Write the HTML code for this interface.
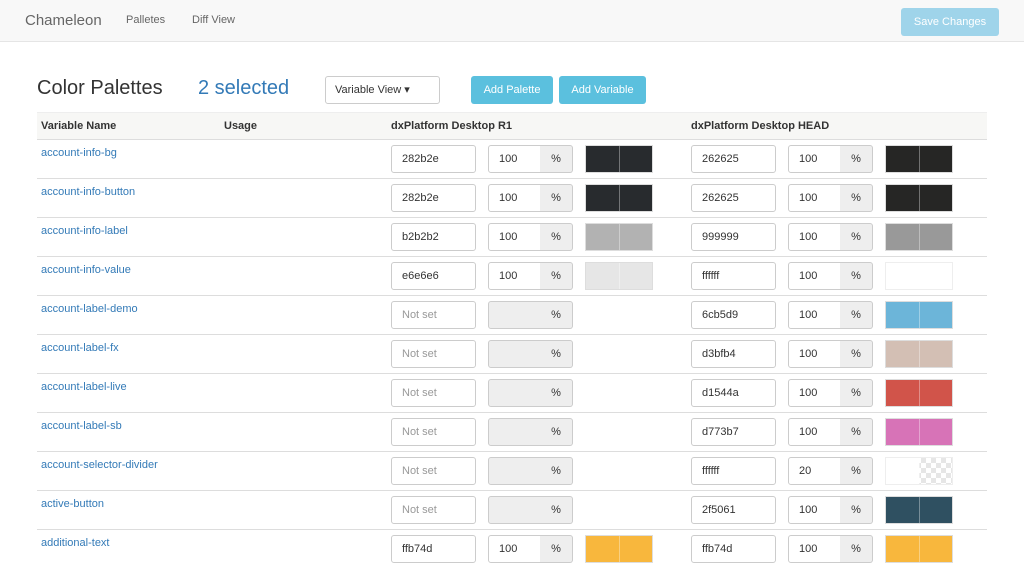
<!DOCTYPE html><html><head><style>
body{margin:0;width:1024px;height:569px;overflow:hidden;background:#fff;font-family:"Liberation Sans",sans-serif;color:#333;position:relative}
.nav{position:absolute;left:0;top:0;width:1024px;height:41px;background:#f8f8f8;border-bottom:1px solid #e5e5e5}
.a{position:absolute}
.row{position:absolute;left:37px;width:950px;height:38px;border-top:1px solid #ddd}
.nm{position:absolute;left:4px;top:7px;font-size:11px;color:#337ab7}
.in{position:absolute;top:5px;height:26px;border:1px solid #ccc;border-radius:3px;background:#fff;font-size:11px;line-height:26px;padding-left:10px;box-sizing:border-box;height:28px}
.hx{width:85px}.ns{color:#999}
.pc{width:53px;border-radius:3px 0 0 3px}
.ad{position:absolute;top:5px;width:33px;height:28px;box-sizing:border-box;border:1px solid #ccc;border-left:none;border-radius:0 3px 3px 0;background:#eee;font-size:11px;line-height:26px;text-align:center}
.dis{background:#eee}
.sw{position:absolute;top:5px;width:68px;height:28px;box-sizing:border-box;border:1px solid #ddd}
.sw:after{content:"";position:absolute;left:33px;top:0;bottom:0;width:1px;background:rgba(255,255,255,.35)}
</style></head><body>
<div class="nav">
<div class="a" style="left:25px;top:12px;font-size:15px;color:#666">Chameleon</div>
<div class="a" style="left:126px;top:14px;font-size:11px;color:#666">Palletes</div>
<div class="a" style="left:192px;top:14px;font-size:11px;color:#666">Diff View</div>
<div class="a" style="left:901px;top:8px;width:98px;height:28px;background:#9fd4ea;border-radius:3px;color:#fff;font-size:11px;line-height:28px;text-align:center">Save Changes</div>
</div>
<div class="a" style="left:37px;top:77px;font-size:20px;color:#333">Color Palettes</div>
<div class="a" style="left:198px;top:77px;font-size:20px;color:#337ab7">2 selected</div>
<div class="a" style="left:325px;top:76px;width:115px;height:28px;box-sizing:border-box;border:1px solid #ccc;border-radius:3px;font-size:11px;line-height:26px;padding-left:9px">Variable View ▾</div>
<div class="a" style="left:471px;top:76px;width:82px;height:28px;background:#5bc0de;border-radius:3px;color:#fff;font-size:11px;line-height:28px;text-align:center">Add Palette</div>
<div class="a" style="left:559px;top:76px;width:87px;height:28px;background:#5bc0de;border-radius:3px;color:#fff;font-size:11px;line-height:28px;text-align:center">Add Variable</div>
<div class="a" style="left:37px;top:112px;width:950px;height:27px;background:#f7f7f5;border-top:1px solid #eee;font-size:11px;font-weight:bold">
<span class="a" style="left:4px;top:7px">Variable Name</span><span class="a" style="left:187px;top:7px">Usage</span><span class="a" style="left:354px;top:7px">dxPlatform Desktop R1</span><span class="a" style="left:654px;top:7px">dxPlatform Desktop HEAD</span></div>

<div class="row" style="top:139px"><div class="nm">account-info-bg</div>
<div class="in hx" style="left:354px">282b2e</div><div class="in pc" style="left:451px">100</div><div class="ad" style="left:503px">%</div><div class="sw" style="left:548px;background:#282b2e"></div>
<div class="in hx" style="left:654px">262625</div><div class="in pc" style="left:751px">100</div><div class="ad" style="left:803px">%</div><div class="sw" style="left:848px;background:#262625"></div></div>

<div class="row" style="top:178px"><div class="nm">account-info-button</div>
<div class="in hx" style="left:354px">282b2e</div><div class="in pc" style="left:451px">100</div><div class="ad" style="left:503px">%</div><div class="sw" style="left:548px;background:#282b2e"></div>
<div class="in hx" style="left:654px">262625</div><div class="in pc" style="left:751px">100</div><div class="ad" style="left:803px">%</div><div class="sw" style="left:848px;background:#262625"></div></div>

<div class="row" style="top:217px"><div class="nm">account-info-label</div>
<div class="in hx" style="left:354px">b2b2b2</div><div class="in pc" style="left:451px">100</div><div class="ad" style="left:503px">%</div><div class="sw" style="left:548px;background:#b2b2b2"></div>
<div class="in hx" style="left:654px">999999</div><div class="in pc" style="left:751px">100</div><div class="ad" style="left:803px">%</div><div class="sw" style="left:848px;background:#999"></div></div>

<div class="row" style="top:256px"><div class="nm">account-info-value</div>
<div class="in hx" style="left:354px">e6e6e6</div><div class="in pc" style="left:451px">100</div><div class="ad" style="left:503px">%</div><div class="sw" style="left:548px;background:#e6e6e6"></div>
<div class="in hx" style="left:654px">ffffff</div><div class="in pc" style="left:751px">100</div><div class="ad" style="left:803px">%</div><div class="sw" style="left:848px;background:#fff;border-color:#eee"></div></div>

<div class="row" style="top:295px"><div class="nm">account-label-demo</div>
<div class="in hx ns" style="left:354px">Not set</div><div class="in pc dis" style="left:451px"></div><div class="ad" style="left:503px">%</div>
<div class="in hx" style="left:654px">6cb5d9</div><div class="in pc" style="left:751px">100</div><div class="ad" style="left:803px">%</div><div class="sw" style="left:848px;background:#6cb5d9"></div></div>

<div class="row" style="top:334px"><div class="nm">account-label-fx</div>
<div class="in hx ns" style="left:354px">Not set</div><div class="in pc dis" style="left:451px"></div><div class="ad" style="left:503px">%</div>
<div class="in hx" style="left:654px">d3bfb4</div><div class="in pc" style="left:751px">100</div><div class="ad" style="left:803px">%</div><div class="sw" style="left:848px;background:#d3bfb4"></div></div>

<div class="row" style="top:373px"><div class="nm">account-label-live</div>
<div class="in hx ns" style="left:354px">Not set</div><div class="in pc dis" style="left:451px"></div><div class="ad" style="left:503px">%</div>
<div class="in hx" style="left:654px">d1544a</div><div class="in pc" style="left:751px">100</div><div class="ad" style="left:803px">%</div><div class="sw" style="left:848px;background:#d1544a"></div></div>

<div class="row" style="top:412px"><div class="nm">account-label-sb</div>
<div class="in hx ns" style="left:354px">Not set</div><div class="in pc dis" style="left:451px"></div><div class="ad" style="left:503px">%</div>
<div class="in hx" style="left:654px">d773b7</div><div class="in pc" style="left:751px">100</div><div class="ad" style="left:803px">%</div><div class="sw" style="left:848px;background:#d773b7"></div></div>

<div class="row" style="top:451px"><div class="nm">account-selector-divider</div>
<div class="in hx ns" style="left:354px">Not set</div><div class="in pc dis" style="left:451px"></div><div class="ad" style="left:503px">%</div>
<div class="in hx" style="left:654px">ffffff</div><div class="in pc" style="left:751px">20</div><div class="ad" style="left:803px">%</div><div class="sw" style="left:848px;border-color:#eee;background:linear-gradient(90deg,#fff 50%,transparent 50%),repeating-conic-gradient(#e6e6e6 0 25%,#fff 0 50%) 0 0/10px 10px"></div></div>

<div class="row" style="top:490px"><div class="nm">active-button</div>
<div class="in hx ns" style="left:354px">Not set</div><div class="in pc dis" style="left:451px"></div><div class="ad" style="left:503px">%</div>
<div class="in hx" style="left:654px">2f5061</div><div class="in pc" style="left:751px">100</div><div class="ad" style="left:803px">%</div><div class="sw" style="left:848px;background:#2f5061"></div></div>

<div class="row" style="top:529px"><div class="nm">additional-text</div>
<div class="in hx" style="left:354px">ffb74d</div><div class="in pc" style="left:451px">100</div><div class="ad" style="left:503px">%</div><div class="sw" style="left:548px;background:#f8b73d"></div>
<div class="in hx" style="left:654px">ffb74d</div><div class="in pc" style="left:751px">100</div><div class="ad" style="left:803px">%</div><div class="sw" style="left:848px;background:#f8b73d"></div></div>
</body></html>
